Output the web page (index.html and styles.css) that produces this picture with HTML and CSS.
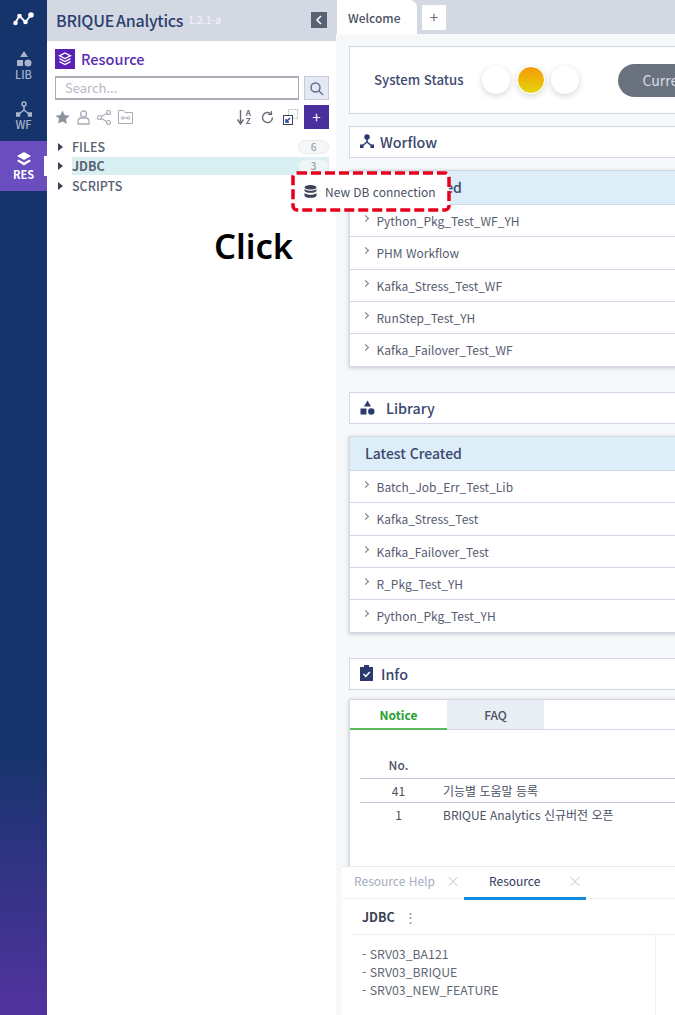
FILE: index.html
```html
<!doctype html>
<html lang="ko">
    <head>
        <meta charset="utf-8">
        <title>BRIQUE Analytics</title>
        <link rel="stylesheet" href="styles.css">
    </head>
    <body>
        <div id="app">
            <nav class="rail">
                <svg class="rail-logo" width="22" height="16" viewBox="0 0 22 16"><path d="M2 12 6.500 5l6 6L18 4" fill="none" stroke="#fff" stroke-width="1.800"/><circle cx="2.500" cy="12" r="2.300" fill="#fff"/><circle cx="6.500" cy="5" r="2.300" fill="#fff"/><circle cx="12.500" cy="11" r="2.300" fill="#fff"/><circle cx="18" cy="4" r="2.800" fill="#fff"/></svg>
                <a class="rail-item">
                    <svg width="16" height="16" viewBox="0 0 16 16" fill="#a9b4cc"><path d="M8 0l4 6H4z"/><rect x="1" y="9" width="6" height="6"/><circle cx="12" cy="12" r="3.500"/></svg>
                    <span>LIB</span>
                </a>
                <a class="rail-item">
                    <svg width="16" height="16" viewBox="0 0 16 16" fill="none" stroke="#a9b4cc" stroke-width="1.500"><circle cx="8" cy="3" r="2"/><path d="M8 5v4L3 13M8 9l5 4"/><rect x="0.500" y="12" width="3" height="3" fill="#a9b4cc"/><rect x="12.500" y="12" width="3" height="3" fill="#a9b4cc"/></svg>
                    <span>WF</span>
                </a>
                <a class="rail-item rail-active">
                    <svg width="16" height="16" viewBox="0 0 16 16" fill="#fff"><path d="M8 1l7 4-7 4-7-4z"/><path d="M2.500 8.500 8 11.500l5.500-3L15 10l-7 4.500L1 10z"/></svg>
                    <span>RES</span>
                </a>
            </nav>

            <aside class="panel">
                <header class="panel-head">
                    <span class="brand">BRIQUE<b>Analytics</b></span>
                    <span class="version">1.2.1-a</span>
                    <button class="collapse"><svg width="8" height="10" viewBox="0 0 8 10" fill="none" stroke="#fff" stroke-width="1.500"><path d="M6 1 2 5l4 4"/></svg></button>
                </header>
                <div class="panel-body">
                    <h2 class="res-title">
                        <span class="res-icon"><svg width="14" height="14" viewBox="0 0 14 14" fill="none" stroke="#fff" stroke-width="1.300"><path d="M7 1l5.500 2.800L7 6.600 1.500 3.800zM1.500 6.700 7 9.500l5.500-2.800M1.500 9.700 7 12.500l5.500-2.800"/></svg></span>
                        <span class="res-name">Resource</span>
                    </h2>
                    <div class="search-row">
                        <input class="search" type="text" placeholder="Search...">
                        <button class="search-btn"><svg width="15" height="15" viewBox="0 0 15 15" fill="none" stroke="#5f7391" stroke-width="1.500"><circle cx="6.500" cy="6.500" r="4.500"/><path d="M10 10l4 4"/></svg></button>
                    </div>
                    <div class="tools">
                        <svg width="15" height="15" viewBox="0 0 15 15" fill="#8d93a1"><path d="M7.500 0.500l2.100 4.600 5 .6-3.700 3.400 1 4.900-4.400-2.500L3.100 13.500l1-4.900L.4 5.700l5-.6z"/></svg>
                        <svg class="tool-gap" width="13" height="15" viewBox="0 0 13 15" fill="none" stroke="#a8acb6" stroke-width="1.300"><circle cx="6.500" cy="4" r="3"/><path d="M1 14v-2.500Q1 8 4.500 8h4q3.500 0 3.500 3.500V14z"/></svg>
                        <svg class="tool-gap" width="14" height="15" viewBox="0 0 14 15" fill="none" stroke="#a8acb6" stroke-width="1.100"><circle cx="2.500" cy="7.500" r="2"/><circle cx="11.500" cy="2.500" r="2"/><circle cx="11.500" cy="12.500" r="2"/><path d="M4.300 6.500 9.700 3.500M4.300 8.500l5.400 3"/></svg>
                        <svg class="tool-gap" width="15" height="14" viewBox="0 0 15 14" fill="none" stroke="#a8acb6" stroke-width="1"><path d="M.5 13.500V.5h5l1.500 2h7.500v11z"/><circle cx="4.500" cy="8" r="1.300"/><circle cx="10.500" cy="8" r="1.300"/><path d="M6 8h3"/></svg>
                        <span class="tools-space"></span>
                        <span class="sort">
                            <svg width="7" height="15" viewBox="0 0 7 15" fill="none" stroke="#666d7a" stroke-width="1.400"><path d="M3.500 0v13M.5 9.500 3.500 14l3-4.500"/></svg>
                            <span class="sort-az">A<br>Z</span>
                        </span>
                        <svg class="tool-gap2" width="13" height="13" viewBox="0 0 13 13" fill="none" stroke="#666d7a" stroke-width="1.400"><path d="M11.500 6.500a5 5 0 1 1-1.600-3.700"/><path d="M10.500 0v3.500H7" stroke-width="1.200"/></svg>
                        <svg class="tool-gap3" width="15" height="16" viewBox="0 0 15 16" fill="none"><rect x="5.500" y="0.500" width="9" height="9" stroke="#b5b9c2" stroke-dasharray="2 1"/><rect x="0.500" y="6.500" width="9" height="9" fill="#fff" stroke="#3a4254"/><path d="M7 9 3 13M3 10v3h3" stroke="#2946a8" stroke-width="1.500"/></svg>
                        <button class="add-btn">+</button>
                    </div>
                    <ul class="tree">
                        <li class="tree-row"><i class="caret"></i><span class="tree-name">FILES</span><span class="badge">6</span></li>
                        <li class="tree-row tree-active"><i class="caret"></i><span class="tree-name">JDBC</span><span class="badge">3</span></li>
                        <li class="tree-row"><i class="caret"></i><span class="tree-name">SCRIPTS</span></li>
                    </ul>
                </div>
            </aside>

            <main class="main">
                <div class="tabbar">
                    <span class="tab">Welcome</span>
                    <button class="tab-add">+</button>
                </div>
                <div class="welcome">
                    <section class="box status">
                        <span class="status-label">System Status</span>
                        <span class="light"></span>
                        <span class="light light-on"></span>
                        <span class="light"></span>
                        <span class="pill">Current</span>
                    </section>

                    <section class="box title-bar">
                        <svg width="14" height="14" viewBox="0 0 14 14" fill="none" stroke="#2b3a6e" stroke-width="1.500"><circle cx="7" cy="3" r="2" fill="#2b3a6e"/><path d="M7 4v4l-5 4M7 8l5 4"/><rect x="0" y="10.500" width="3.500" height="3.500" fill="#2b3a6e" stroke="none"/><rect x="10.500" y="10.500" width="3.500" height="3.500" fill="#2b3a6e" stroke="none"/></svg>
                        Worflow
                    </section>
                    <section class="box list-card">
                        <h3 class="list-head">Latest Created</h3>
                        <ul class="list">
                            <li>Python_Pkg_Test_WF_YH</li>
                            <li>PHM Workflow</li>
                            <li>Kafka_Stress_Test_WF</li>
                            <li>RunStep_Test_YH</li>
                            <li>Kafka_Failover_Test_WF</li>
                        </ul>
                    </section>

                    <section class="box title-bar title-bar-lib">
                        <svg width="15" height="15" viewBox="0 0 15 15" fill="#2b3a6e"><path d="M7.500 0.500l3.500 6H4z"/><rect x="0.500" y="8.500" width="6" height="6"/><circle cx="11.300" cy="11.500" r="3.200"/></svg>
                        Library
                    </section>
                    <section class="box list-card">
                        <h3 class="list-head">Latest Created</h3>
                        <ul class="list">
                            <li>Batch_Job_Err_Test_Lib</li>
                            <li>Kafka_Stress_Test</li>
                            <li>Kafka_Failover_Test</li>
                            <li>R_Pkg_Test_YH</li>
                            <li>Python_Pkg_Test_YH</li>
                        </ul>
                    </section>

                    <section class="box title-bar info-bar">
                        <svg width="13" height="16" viewBox="0 0 13 16"><path d="M0 2h4V0h5v2h4v14H0z" fill="#2b3a6e"/><path d="M3.500 9l2.300 2.300 4-4.300" fill="none" stroke="#fff" stroke-width="1.500"/></svg>
                        Info
                    </section>
                    <section class="box info-card">
                        <div class="info-tabs">
                            <span class="info-tab info-tab-on">Notice</span>
                            <span class="info-tab">FAQ</span>
                        </div>
                        <table class="notice">
                            <tr><th>No.</th><th></th></tr>
                            <tr><td>41</td><td>기능별 도움말 등록</td></tr>
                            <tr><td>1</td><td>BRIQUE Analytics 신규버전 오픈</td></tr>
                        </table>
                    </section>
                </div>

                <section class="dock">
                    <div class="dock-tabs">
                        <span class="dock-tab">Resource Help<i class="x">×</i></span>
                        <span class="dock-tab dock-tab-on">Resource<i class="x">×</i></span>
                    </div>
                    <div class="dock-head">
                        <b>JDBC</b>
                        <span class="dots">⋮</span>
                    </div>
                    <div class="dock-body">
                        <div class="dock-list">
                            - SRV03_BA121<br>
                            - SRV03_BRIQUE<br>
                            - SRV03_NEW_FEATURE
                        </div>
                    </div>
                </section>
            </main>

            <div class="popup">
                <svg class="popup-dash" width="160" height="41" viewBox="0 0 160 41"><rect x="2" y="2" width="156" height="37" rx="4" fill="#fff" stroke="#e8001c" stroke-width="3.500" stroke-dasharray="10 4"/></svg>
                <svg class="popup-icon" width="13" height="13" viewBox="0 0 13 13" fill="#3b4456"><ellipse cx="6.500" cy="2.300" rx="6" ry="2.300"/><path d="M.5 4v1.500C.5 7 3 7.800 6.500 7.800s6-.8 6-2.300V4c-1 1.200-3.500 1.800-6 1.800S1.500 5.200.5 4z"/><path d="M.5 8v2.500c0 1.500 2.500 2.300 6 2.300s6-.8 6-2.300V8c-1 1.200-3.500 1.800-6 1.800S1.500 9.200.5 8z"/></svg>
                <span class="popup-text">New DB connection</span>
            </div>
            <div class="click-note">Click</div>
        </div>
    </body>
</html>
```

FILE: styles.css
```css
html,
body {
    margin: 0;
    height: 100%;
    overflow: hidden;
    font-family: "Noto Sans CJK KR", "Noto Sans", sans-serif;
    color: #4a5163;
}

#app {
    position: relative;
    display: flex;
    height: 1015px;
    width: 675px;
    overflow: hidden;
}

ul {
    list-style: none;
    margin: 0;
    padding: 0;
}

button {
    padding: 0;
    border: 0;
    font-family: inherit;
}

/* left rail */
.rail {
    flex: none;
    width: 47px;
    display: flex;
    flex-direction: column;
    align-items: stretch;
    background: linear-gradient(#14346b 0, #14346b 73%, #52339f 100%);
}

.rail-logo {
    align-self: center;
    margin: 11px 0 14px;
}

.rail-item {
    height: 50px;
    display: flex;
    flex-direction: column;
    align-items: center;
    justify-content: center;
    font-size: 11px;
    line-height: 13px;
    font-weight: 500;
    color: #a9b4cc;
}

.rail-item svg {
    margin-bottom: 1px;
}

.rail-active {
    position: relative;
    background: #6a4dbf;
    color: #fff;
    font-weight: 700;
}

.rail-active::after {
    content: "";
    position: absolute;
    right: 0;
    top: 15px;
    width: 3px;
    height: 20px;
    background: #fff;
}

/* resource panel */
.panel {
    flex: none;
    width: 289px;
    background: #fff;
}

.panel-head {
    height: 41px;
    display: flex;
    align-items: center;
    padding: 0 9px 2px 9px;
    box-sizing: border-box;
    background: #d3d8e3;
}

.brand {
    font-size: 16px;
    font-weight: 500;
    color: #2b3f6f;
    letter-spacing: -0.25px;
}

.brand b {
    margin-left: 2px;
    font-weight: 500;
}

.version {
    margin-left: 5px;
    font-size: 10.500px;
    color: #f4f5f8;
}

.collapse {
    margin-left: auto;
    width: 16px;
    height: 16px;
    display: flex;
    align-items: center;
    justify-content: center;
    background: #596273;
}

.panel-body {
    padding: 8px 7px 0 8px;
}

.res-title {
    margin: 0;
    height: 20px;
    display: flex;
    align-items: center;
    gap: 6px;
    font-size: 14.500px;
    font-weight: 500;
    color: #5a2cb0;
}

.res-name {
    padding-bottom: 2px;
}

.res-icon {
    width: 20px;
    height: 20px;
    display: flex;
    align-items: center;
    justify-content: center;
    background: #5b21b6;
}

.search-row {
    display: flex;
    gap: 5px;
    margin-top: 7px;
}

.search {
    flex: 1;
    min-width: 0;
    height: 24px;
    box-sizing: border-box;
    border: 1px solid #a9adb8;
    border-width: 2px 1px;
    padding: 0 9px 2px;
    font-family: inherit;
    font-size: 13px;
    outline: 0;
}

.search::placeholder {
    color: #b3b8c6;
}

.search-btn {
    width: 25px;
    height: 24px;
    box-sizing: border-box;
    display: flex;
    align-items: center;
    justify-content: center;
    border: 1px solid #c5cad6;
    background: #e4e8f3;
}

.tools {
    display: flex;
    align-items: center;
    height: 24px;
    margin-top: 5px;
}

.tool-gap {
    margin-left: 7px;
}

.tools-space {
    flex: 1;
}

.sort {
    display: flex;
    align-items: center;
    gap: 2px;
}

.sort-az {
    font-size: 8px;
    line-height: 8px;
    font-weight: 700;
    color: #666d7a;
}

.tool-gap2 {
    margin-left: 10px;
}

.tool-gap3 {
    margin-left: 9px;
    margin-right: 6px;
}

.add-btn {
    width: 25px;
    height: 24px;
    background: #4c2f9f;
    color: #fff;
    font-size: 15px;
    line-height: 24px;
}

.tree {
    margin-top: 8px;
}

.tree-row {
    position: relative;
    height: 19.600px;
    display: flex;
    align-items: center;
    font-size: 12.500px;
    font-weight: 500;
    color: #5a6170;
}

.caret {
    width: 0;
    height: 0;
    margin: 0 9px 0 3px;
    border-left: 5px solid #3d4452;
    border-top: 4px solid transparent;
    border-bottom: 4px solid transparent;
}

.tree-name {
    flex: 1;
    height: 18px;
    line-height: 18px;
}

.tree-active .tree-name {
    background: #d9f0f2;
    font-weight: 700;
    margin-right: -31px;
}

.badge {
    position: relative;
    width: 29px;
    height: 12px;
    border: 1px solid #e9ebef;
    border-radius: 7px;
    background: #f5f6f8;
    font-size: 10px;
    line-height: 12px;
    text-align: center;
    color: #9aa0ac;
}

.tree-active .badge {
    background: #eef6f7;
}

/* main area */
.main {
    flex: none;
    width: 339px;
    height: 1015px;
    display: flex;
    flex-direction: column;
    background: #f7f8f9;
    overflow: hidden;
}

.tabbar {
    flex: none;
    height: 34px;
    display: flex;
    align-items: center;
    background: #d3d8e3;
}

.tab {
    align-self: stretch;
    width: 80px;
    margin-left: 1px;
    display: flex;
    align-items: center;
    padding-left: 11px;
    box-sizing: border-box;
    background: #fff;
    border-top-right-radius: 8px;
    font-size: 12px;
    font-weight: 500;
}

.tab-add {
    width: 24px;
    height: 25px;
    margin-left: 5px;
    background: #fff;
    font-size: 15px;
    line-height: 24px;
    color: #666d7a;
}

.welcome {
    flex: 1;
    min-height: 0;
    width: 420px;
    padding: 12px 0 0 13px;
    overflow: hidden;
}

.box {
    box-sizing: border-box;
    background: #fff;
    border: 1px solid #d3d7e5;
    border-right: 0;
}

.status {
    height: 68px;
    display: flex;
    align-items: center;
}

.status-label {
    margin-left: 24px;
    padding-bottom: 2px;
    width: 108px;
    font-size: 13.200px;
    font-weight: 500;
    color: #3f4a70;
}

.light {
    width: 28px;
    height: 28px;
    margin-right: 6.500px;
    border-radius: 50%;
    background: #fff;
    box-shadow: 0 2px 6px rgba(0, 0, 0, 0.16);
}

.light-on {
    box-sizing: border-box;
    border: 1px solid #fff;
    background: linear-gradient(#f79a06, #e2d40a);
}

.pill {
    margin-left: 32px;
    width: 110px;
    height: 33px;
    box-sizing: border-box;
    padding-left: 25px;
    border-radius: 17px 0 0 17px;
    background: #6a7280;
    font-size: 14px;
    line-height: 33px;
    color: #d9dde3;
    white-space: nowrap;
    overflow: hidden;
}

.title-bar {
    height: 32px;
    margin-top: 12px;
    display: flex;
    align-items: center;
    gap: 6px;
    padding: 0 0 2px 10px;
    font-size: 14.300px;
    font-weight: 500;
    color: #3a4670;
}

.title-bar-lib {
    gap: 11px;
}

.title-bar + .list-card {
    margin-top: 12px;
}

.list-card {
    height: 197px;
    box-shadow: 0 1px 4px rgba(40, 50, 80, 0.25);
}

.list-card + .title-bar {
    margin-top: 25px;
}

.list-head {
    margin: 0;
    height: 34px;
    box-sizing: border-box;
    padding-left: 15px;
    border-bottom: 1px solid #cfd5e2;
    background: #deeef9;
    font-size: 14px;
    font-weight: 500;
    line-height: 32px;
    color: #3a4670;
}

.list li {
    position: relative;
    height: 32.300px;
    box-sizing: border-box;
    padding-left: 26.500px;
    border-bottom: 1px solid #d3d7e5;
    font-size: 12px;
    line-height: 31px;
    color: #565c70;
}

.list li:last-child {
    border-bottom: 0;
}

.list li::before {
    content: "";
    position: absolute;
    left: 13px;
    top: 11px;
    width: 4px;
    height: 4px;
    border-top: 1px solid #6f7585;
    border-right: 1px solid #6f7585;
    transform: rotate(45deg);
}

.info-bar {
    gap: 8px;
}

.info-card {
    height: 200px;
    margin-top: 9px;
    box-shadow: 0 1px 4px rgba(40, 50, 80, 0.25);
}

.info-tabs {
    display: flex;
    height: 30px;
    box-sizing: border-box;
    border-bottom: 1px solid #d3d7e5;
}

.info-tab {
    width: 97px;
    text-align: center;
    background: #e9eef5;
    font-size: 12px;
    font-weight: 500;
    line-height: 29px;
    color: #4a5163;
}

.info-tab-on {
    box-sizing: border-box;
    height: 30px;
    background: #fff;
    color: #2ba02f;
    font-weight: 700;
    border-bottom: 2px solid #5cb85c;
}

.notice {
    margin: 21px 0 0 10px;
    width: 400px;
    border-collapse: collapse;
    font-size: 12px;
    color: #4a5163;
}

.notice th {
    height: 25px;
    font-weight: 500;
    text-align: center;
    border-bottom: 1px solid #bcc5d8;
}

.notice td {
    height: 23px;
    padding: 0;
    border-bottom: 1px solid #bcc5d8;
}

.notice tr:last-child td {
    border-bottom: 0;
}

.notice td:first-child,
.notice th:first-child {
    width: 75px;
    text-align: center;
}

.notice td + td {
    padding-left: 6px;
}

/* bottom dock */
.dock {
    flex: none;
    position: relative;
    height: 149px;
    margin-left: 6px;
    background: #fff;
    border-top: 1px solid #e6e8ee;
    box-sizing: border-box;
}

.dock-tabs {
    display: flex;
    height: 32px;
    border-bottom: 1px solid #eceef2;
    box-sizing: border-box;
}

.dock-tab {
    position: relative;
    width: 122px;
    box-sizing: border-box;
    padding-left: 12px;
    font-size: 12px;
    line-height: 27px;
    color: #a5adc0;
}

.dock-tab-on {
    padding-left: 25px;
    color: #2d3a5e;
    height: 33px;
    border-bottom: 3px solid #0f8be0;
}

.x {
    position: absolute;
    right: 4px;
    top: 0;
    font-style: normal;
    font-size: 14px;
    font-weight: 300;
    color: #c3c8d3;
}

.dock-head {
    height: 35px;
    margin-left: 10px;
    display: flex;
    align-items: center;
    gap: 9px;
    padding-left: 10px;
    border-bottom: 1px solid #eceef2;
    font-size: 12.500px;
    color: #3a4254;
}

.dots {
    color: #8b91a0;
    font-size: 13px;
}

.dock-body {
    height: 80px;
    margin-left: 10px;
    width: 303px;
    border-right: 1px solid #eceef2;
}

.dock-list {
    padding: 10px 0 0 10px;
    font-size: 12.300px;
    line-height: 18px;
    color: #626775;
}

/* things lying over the page */
.popup {
    position: absolute;
    left: 291px;
    top: 171px;
    width: 160px;
    height: 41px;
    display: flex;
    align-items: center;
    gap: 8px;
    padding-left: 13px;
    box-sizing: border-box;
    font-size: 12px;
    color: #4a5163;
}

.popup-dash {
    position: absolute;
    left: 0;
    top: 0;
}

.popup-icon,
.popup-text {
    position: relative;
}

.click-note {
    position: absolute;
    left: 214px;
    top: 223px;
    font-family: "Noto Sans", sans-serif;
    font-size: 34.500px;
    line-height: 45px;
    font-weight: 600;
    color: #000;
}
```
